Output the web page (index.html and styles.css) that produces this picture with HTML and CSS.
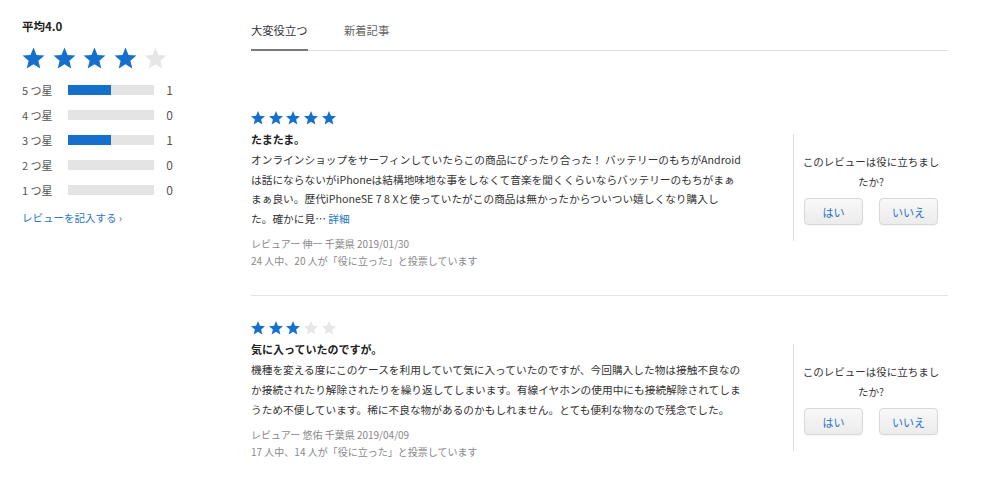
FILE: index.html
```html
<!DOCTYPE html>
<html lang="ja">
<head>
<meta charset="utf-8">
<title>レビュー</title>
<link rel="stylesheet" href="styles.css">
</head>
<body>
<svg class="defs" width="0" height="0" aria-hidden="true">
  <symbol id="star" viewBox="0 0 24 24">
    <polygon points="12,1.5 14.9,8.6 22.5,9.2 16.7,14.2 18.5,21.6 12,17.6 5.5,21.6 7.3,14.2 1.5,9.2 9.1,8.6"/>
  </symbol>
</svg>
<div class="page">
  <aside class="summary">
    <div class="avg">平均4.0</div>
    <div class="big-stars">
      <svg class="star on"><use href="#star"/></svg>
      <svg class="star on"><use href="#star"/></svg>
      <svg class="star on"><use href="#star"/></svg>
      <svg class="star on"><use href="#star"/></svg>
      <svg class="star off"><use href="#star"/></svg>
    </div>
    <ul class="dist">
      <li class="dist-row"><span class="dist-label">5 つ星</span><span class="bar"><span class="bar-fill" style="width:50%"></span></span><span class="dist-count">1</span></li>
      <li class="dist-row"><span class="dist-label">4 つ星</span><span class="bar"><span class="bar-fill" style="width:0%"></span></span><span class="dist-count">0</span></li>
      <li class="dist-row"><span class="dist-label">3 つ星</span><span class="bar"><span class="bar-fill" style="width:50%"></span></span><span class="dist-count">1</span></li>
      <li class="dist-row"><span class="dist-label">2 つ星</span><span class="bar"><span class="bar-fill" style="width:0%"></span></span><span class="dist-count">0</span></li>
      <li class="dist-row"><span class="dist-label">1 つ星</span><span class="bar"><span class="bar-fill" style="width:0%"></span></span><span class="dist-count">0</span></li>
    </ul>
    <a class="write-link" href="#">レビューを記入する ›</a>
  </aside>

  <main class="reviews">
    <nav class="tabs">
      <span class="tab active">大変役立つ</span>
      <span class="tab">新着記事</span>
    </nav>
    <div class="review-list">
      <article class="review">
        <div class="review-main">
          <div class="small-stars">
            <svg class="sstar on"><use href="#star"/></svg>
            <svg class="sstar on"><use href="#star"/></svg>
            <svg class="sstar on"><use href="#star"/></svg>
            <svg class="sstar on"><use href="#star"/></svg>
            <svg class="sstar on"><use href="#star"/></svg>
          </div>
          <h3 class="review-title">たまたま。</h3>
          <p class="review-body">オンラインショップをサーフィンしていたらこの商品にぴったり合った！ バッテリーのもちがAndroid<br>は話にならないがiPhoneは結構地味地な事をしなくて音楽を聞くくらいならバッテリーのもちがまぁ<br>まぁ良い。歴代iPhoneSE 7 8 Xと使っていたがこの商品は無かったからついつい嬉しくなり購入し<br>た。確かに見… <a class="more" href="#">詳細</a></p>
          <div class="meta">
            <div>レビュアー 伸一 千葉県 2019/01/30</div>
            <div>24 人中、20 人が「役に立った」と投票しています</div>
          </div>
        </div>
        <div class="helpful">
          <p class="helpful-q">このレビューは役に立ちましたか?</p>
          <div class="helpful-btns">
            <button class="btn">はい</button>
            <button class="btn">いいえ</button>
          </div>
        </div>
      </article>

      <article class="review">
        <div class="review-main">
          <div class="small-stars">
            <svg class="sstar on"><use href="#star"/></svg>
            <svg class="sstar on"><use href="#star"/></svg>
            <svg class="sstar on"><use href="#star"/></svg>
            <svg class="sstar off"><use href="#star"/></svg>
            <svg class="sstar off"><use href="#star"/></svg>
          </div>
          <h3 class="review-title">気に入っていたのですが。</h3>
          <p class="review-body">機種を変える度にこのケースを利用していて気に入っていたのですが、今回購入した物は接触不良なの<br>か接続されたり解除されたりを繰り返してしまいます。有線イヤホンの使用中にも接続解除されてしま<br>うため不便しています。稀に不良な物があるのかもしれません。とても便利な物なので残念でした。</p>
          <div class="meta">
            <div>レビュアー 悠佑 千葉県 2019/04/09</div>
            <div>17 人中、14 人が「役に立った」と投票しています</div>
          </div>
        </div>
        <div class="helpful">
          <p class="helpful-q">このレビューは役に立ちましたか?</p>
          <div class="helpful-btns">
            <button class="btn">はい</button>
            <button class="btn">いいえ</button>
          </div>
        </div>
      </article>
    </div>
  </main>
</div>
</body>
</html>
```
FILE: styles.css
```css
* { box-sizing: border-box; }

html, body {
  margin: 0;
  padding: 0;
  background: #fff;
}

body {
  font-family: "Noto Sans CJK JP", "Noto Sans", sans-serif;
  color: #333;
}

.defs { position: absolute; width: 0; height: 0; overflow: hidden; }

.page {
  display: flex;
  align-items: flex-start;
}

/* ---------- summary sidebar ---------- */
.summary {
  width: 251px;
  flex: none;
  padding: 18px 0 0 22px;
}

.avg {
  font-size: 11.5px;
  line-height: 17px;
  font-weight: 700;
  color: #222;
}

.big-stars {
  display: flex;
  gap: 5.5px;
  margin: 11px 0 0 -1px;
  height: 25px;
}

.star {
  width: 25px;
  height: 25px;
  flex: none;
}

.on { fill: #1470cc; }
.off { fill: #e6e6e6; }

.dist {
  list-style: none;
  margin: 6.5px 0 0;
  padding: 0;
}

.dist-row {
  display: grid;
  grid-template-columns: 46px 86px 19px;
  align-items: center;
  height: 25px;
}

.dist-label {
  font-size: 11px;
  color: #555;
  line-height: 14px;
}

.bar {
  height: 10px;
  background: #e4e4e4;
  display: block;
}

.bar-fill {
  display: block;
  height: 100%;
  background: #1470cc;
}

.dist-count {
  text-align: right;
  font-size: 12px;
  color: #555;
  line-height: 14px;
}

.write-link {
  display: block;
  margin-top: 7.5px;
  font-size: 10.5px;
  line-height: 16px;
  color: #2a76c8;
  text-decoration: none;
}

/* ---------- reviews ---------- */
.reviews {
  width: 697px;
  flex: none;
}

.tabs {
  display: flex;
  gap: 36.5px;
  border-bottom: 1px solid #dedede;
  height: 51px;
}

.tab {
  font-size: 11.3px;
  line-height: 16px;
  padding: 22px 0 11px;
  color: #666;
  border-bottom: 2px solid transparent;
  height: 51px;
}

.tab.active {
  color: #333;
  border-bottom-color: #7a7a7a;
}

.review-list {
  padding-top: 35px;
}

.review {
  display: flex;
  align-items: flex-start;
  padding: 24px 0 26px;
}

.review + .review {
  border-top: 1px solid #e3e3e3;
}

.review-main {
  flex: 1;
  min-width: 0;
}

.small-stars {
  display: flex;
  gap: 1.7px;
  height: 16px;
  margin-left: -1px;
}

.sstar {
  width: 16px;
  height: 16px;
  flex: none;
}

.review-title {
  margin: 3px 0 0;
  font-size: 11px;
  line-height: 20px;
  font-weight: 700;
  color: #222;
}

.review-body {
  margin: 1px 0 0;
  font-size: 10.7px;
  line-height: 19.6px;
  color: #333;
  white-space: nowrap;
}

.more {
  color: #2a76c8;
  text-decoration: none;
}

.meta {
  margin-top: 8px;
  font-size: 10px;
  line-height: 16.5px;
  color: #888;
}

.helpful {
  width: 155px;
  flex: none;
  margin-top: 24px;
  border-left: 1px solid #dcdcdc;
  padding: 18px 8px 16px;
  text-align: center;
}

.helpful-q {
  margin: 0;
  font-size: 10.5px;
  line-height: 20px;
  color: #333;
}

.helpful-btns {
  display: flex;
  justify-content: center;
  gap: 16px;
  margin-top: 6px;
}

.btn {
  width: 59px;
  height: 27px;
  padding: 0;
  font-family: inherit;
  font-size: 11px;
  color: #2a76c8;
  background: linear-gradient(#f8f8f8, #ececec);
  border: 1px solid #d8d8d8;
  border-radius: 4px;
  box-shadow: 0 1px 1px rgba(0,0,0,0.04);
}
```
